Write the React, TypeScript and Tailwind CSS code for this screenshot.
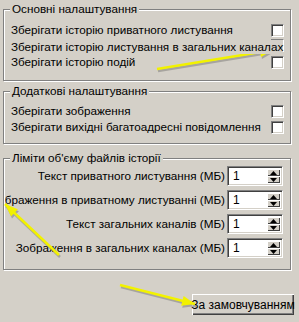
import React from 'react'

// ================================
// TYPES
// ================================

interface GroupProps {
  title: string
  className?: string
  children: React.ReactNode
}

interface Point {
  x: number
  y: number
}

// ================================
// CONSTANTS
// ================================

const LIMIT_ROWS = [
  'Текст приватного листування (МБ)',
  'Зображення в приватному листуванні (МБ)',
  'Текст загальних каналів (МБ)',
  'Зображення в загальних каналах (МБ)',
]

const ARROWS: { from: Point; to: Point }[] = [
  { from: { x: 157, y: 69 }, to: { x: 273, y: 50 } },
  { from: { x: 59, y: 255 }, to: { x: 5, y: 204 } },
  { from: { x: 120, y: 285 }, to: { x: 195, y: 304 } },
]

// ================================
// SMALL PIECES
// ================================

const Group: React.FC<GroupProps> = ({ title, className = '', children }) => (
  <div
    className={`relative w-[288px] border border-[#808080] shadow-[inset_1px_1px_0_#ffffff,1px_1px_0_#ffffff] ${className}`}
  >
    <div className="absolute left-[6px] -top-[8px] bg-[#d4d0c8] px-[2px] leading-[13px] whitespace-nowrap">
      {title}
    </div>
    {children}
  </div>
)

const Checkbox = () => (
  <div className="h-[13px] w-[13px] shrink-0 border border-t-[#808080] border-l-[#808080] border-b-white border-r-white bg-white shadow-[inset_1px_1px_0_#404040,inset_-1px_-1px_0_#d4d0c8]" />
)

const CheckRow: React.FC<{ label: string }> = ({ label }) => (
  <div className="flex h-[16px] items-center justify-between pl-[7px] pr-[6px]">
    <span className="whitespace-nowrap leading-[16px]">{label}</span>
    <Checkbox />
  </div>
)

const SpinBox = () => (
  <div className="flex h-[20px] w-[56px] shrink-0 items-center border border-t-[#808080] border-l-[#808080] border-b-white border-r-white bg-white shadow-[inset_1px_1px_0_#404040,inset_-1px_-1px_0_#d4d0c8] p-[2px]">
    <span className="flex-1 pl-[3px] text-[12px] leading-[14px]">1</span>
    <div className="flex h-[14px] w-[13px] flex-col">
      {['up', 'down'].map((dir) => (
        <div
          key={dir}
          className="flex flex-1 items-center justify-center bg-[#d4d0c8] shadow-[inset_1px_1px_0_#ffffff,inset_-1px_-1px_0_#404040]"
        >
          <svg width="7" height="4" viewBox="0 0 7 4">
            {dir === 'up' ? (
              <polygon points="3.5,0 7,4 0,4" fill="#000" />
            ) : (
              <polygon points="0,0 7,0 3.5,4" fill="#000" />
            )}
          </svg>
        </div>
      ))}
    </div>
  </div>
)

const arrowHead = (from: Point, to: Point) => {
  const dx = to.x - from.x
  const dy = to.y - from.y
  const len = Math.hypot(dx, dy)
  const ux = dx / len
  const uy = dy / len
  const bx = to.x - ux * 13
  const by = to.y - uy * 13
  return `${to.x},${to.y} ${bx - uy * 5},${by + ux * 5} ${bx + uy * 5},${by - ux * 5}`
}

// ================================
// MAIN COMPONENT
// ================================

export default function App() {
  return (
    <div className="relative h-[322px] w-[299px] overflow-hidden bg-[#d4d0c8] font-['Liberation_Sans',Arial,sans-serif] text-[11.7px] text-black">
      <div className="flex flex-col pl-[3px] pt-[9px]">
        {/* Main settings */}
        <Group title="Основні налаштування" className="h-[72px] pt-[12px]">
          <CheckRow label="Зберігати історію приватного листування" />
          <div className="grid h-[16px] grid-cols-[1fr_13px] pl-[7px] pr-[6px]">
            <div className="col-start-2 row-start-1 mt-[1px]">
              <Checkbox />
            </div>
            <span className="relative z-10 col-start-1 col-end-3 row-start-1 mt-[2px] w-fit whitespace-nowrap bg-[#d4d0c8] leading-[14px]">
              Зберігати історію листування в загальних каналах
            </span>
          </div>
          <CheckRow label="Зберігати історію подій" />
        </Group>

        {/* Extra settings */}
        <Group title="Додаткові налаштування" className="mt-[10px] h-[53px] pt-[11px]">
          <CheckRow label="Зберігати зображення" />
          <CheckRow label="Зберігати вихідні багатоадресні повідомлення" />
        </Group>

        {/* History file limits */}
        <Group title="Ліміти об'єму файлів історії" className="mt-[14px] h-[112px] pt-[7px]">
          <div className="flex flex-col gap-[4px] pl-[1px] pr-[7px]">
            {LIMIT_ROWS.map((label) => (
              <div key={label} className="flex h-[20px] items-center gap-[2px]">
                <div className="flex min-w-0 flex-1 justify-end overflow-hidden whitespace-nowrap">
                  <span className="shrink-0">{label}</span>
                </div>
                <SpinBox />
              </div>
            ))}
          </div>
        </Group>

        <div className="mt-[24px] flex justify-end pr-[5px]">
          <button className="flex h-[21px] w-[102px] items-center justify-center whitespace-nowrap bg-[#d4d0c8] text-[12px] shadow-[inset_1px_1px_0_#ffffff,inset_-1px_-1px_0_#404040,inset_-2px_-2px_0_#808080]">
            За замовчуванням
          </button>
        </div>
      </div>

      {/* Annotation arrows */}
      <svg className="pointer-events-none absolute inset-0" width="299" height="322" viewBox="0 0 299 322">
        {ARROWS.map(({ from, to }, i) => (
          <g key={i}>
            <g transform="translate(1,2)" opacity="0.35">
              <line x1={from.x} y1={from.y} x2={to.x} y2={to.y} stroke="#555" strokeWidth="2.5" />
              <polygon points={arrowHead(from, to)} fill="#555" />
            </g>
            <line x1={from.x} y1={from.y} x2={to.x} y2={to.y} stroke="#f2f200" strokeWidth="2.5" />
            <polygon points={arrowHead(from, to)} fill="#f2f200" />
          </g>
        ))}
      </svg>
    </div>
  )
}
